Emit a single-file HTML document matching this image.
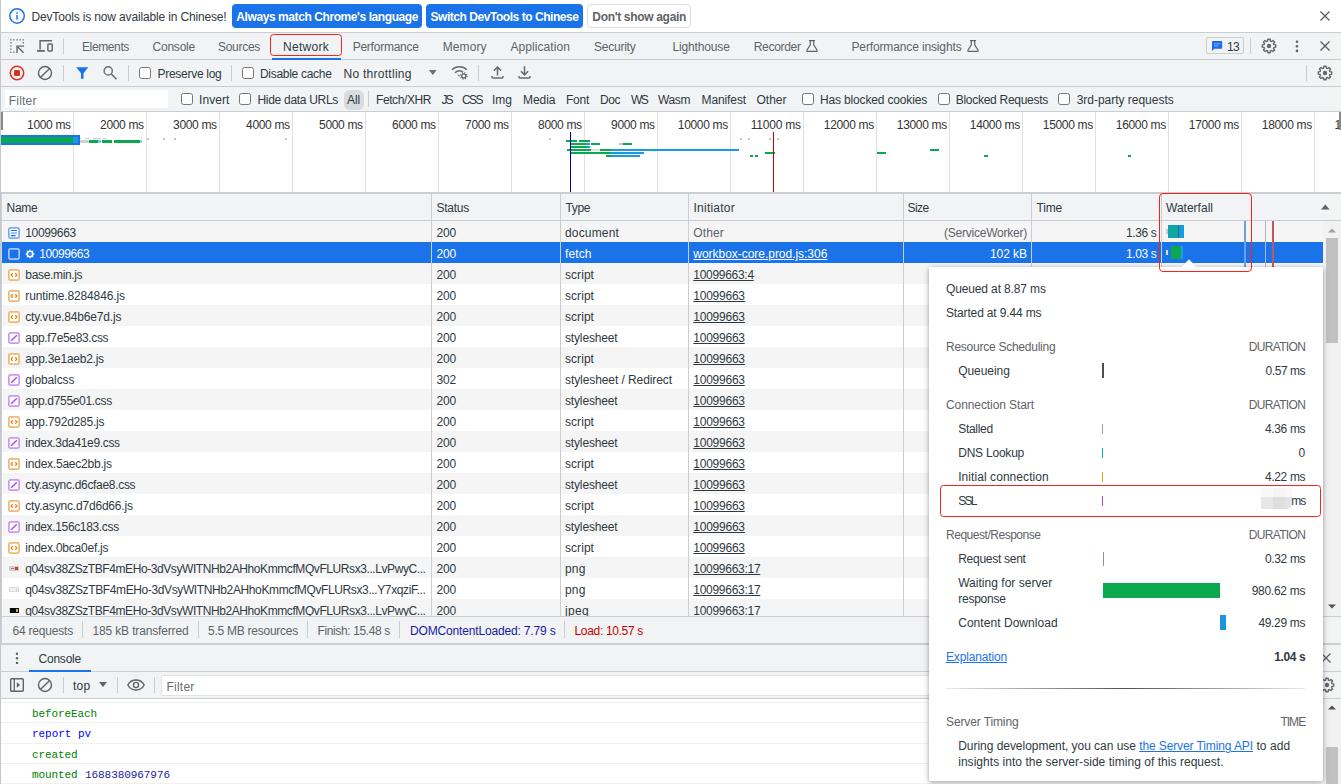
<!DOCTYPE html>
<html><head><meta charset="utf-8">
<style>
*{box-sizing:border-box;margin:0;padding:0}
html,body{width:1341px;height:784px;overflow:hidden;background:#fff}
body{font-family:"Liberation Sans",sans-serif;font-size:12px;color:#303942;position:relative}
.abs{position:absolute}
.t{position:absolute;white-space:pre}
.cb{position:absolute;width:12px;height:12px;border:1px solid #767676;border-radius:2.5px;background:#fff}
svg{position:absolute;overflow:visible}
</style></head><body>
<div class="abs" style="left:0px;top:0px;width:1341px;height:32px;background:#fff;"></div>
<div class="abs" style="left:0px;top:33px;width:1341px;height:26px;background:#f1f3f4;"></div>
<div class="abs" style="left:0px;top:60px;width:1341px;height:26px;background:#f1f3f4;"></div>
<div class="abs" style="left:0px;top:87px;width:1341px;height:24px;background:#f1f3f4;"></div>
<div class="abs" style="left:0px;top:32px;width:1341px;height:1px;background:#cacdd1;"></div>
<div class="abs" style="left:0px;top:59px;width:1341px;height:1px;background:#cacdd1;"></div>
<div class="abs" style="left:0px;top:86px;width:1341px;height:1px;background:#cacdd1;"></div>
<div class="abs" style="left:0px;top:111px;width:1341px;height:1px;background:#cacdd1;"></div>
<svg style="left:9px;top:8px" width="16" height="16" viewBox="0 0 16 16"><circle cx="8.05" cy="7.95" r="7.2" fill="none" stroke="#1a73e8" stroke-width="1.5"/><rect x="7.3" y="7" width="1.5" height="4.6" fill="#1a73e8"/><rect x="7.3" y="4.3" width="1.5" height="1.6" fill="#1a73e8"/></svg>
<span class="t" style="left:31.50px;top:10.00px;line-height:14px;letter-spacing:-0.156px;color:#303942">DevTools is now available in Chinese!</span>
<div class="abs" style="left:232px;top:4px;width:190px;height:24px;background:#1a73e8;border-radius:4px"></div>
<span class="t" style="left:236.30px;top:10.00px;line-height:14px;letter-spacing:-0.418px;color:#fff;font-weight:bold">Always match Chrome&#x27;s language</span>
<div class="abs" style="left:426px;top:4px;width:156.5px;height:24px;background:#1a73e8;border-radius:4px"></div>
<span class="t" style="left:430.50px;top:10.00px;line-height:14px;letter-spacing:-0.454px;color:#fff;font-weight:bold">Switch DevTools to Chinese</span>
<div class="abs" style="left:587px;top:4px;width:103.5px;height:24px;background:#fff;border-radius:4px;border:1px solid #dadce0"></div>
<span class="t" style="left:592.30px;top:10.00px;line-height:14px;letter-spacing:-0.322px;color:#5f6368;font-weight:bold">Don&#x27;t show again</span>
<svg style="left:1320px;top:11px" width="10" height="10" viewBox="0 0 10 10"><path d="M0.5 0.5L9.5 9.5M9.5 0.5L0.5 9.5" stroke="#54585c" stroke-width="1.2" fill="none"/></svg>
<svg style="left:9.85px;top:39px" width="14.2" height="14.2" viewBox="0 0 14.2 14.2"><rect x="0.2" y="0.2" width="1.3" height="1.3" fill="#686c70"/><rect x="3.2" y="0.2" width="1.3" height="1.3" fill="#686c70"/><rect x="6.4" y="0.2" width="1.3" height="1.3" fill="#686c70"/><rect x="9.6" y="0.2" width="1.3" height="1.3" fill="#686c70"/><rect x="12.6" y="0.2" width="1.3" height="1.3" fill="#686c70"/><rect x="0.2" y="3.1" width="1.3" height="1.3" fill="#686c70"/><rect x="0.2" y="6.4" width="1.3" height="1.3" fill="#686c70"/><rect x="0.2" y="9.5" width="1.3" height="1.3" fill="#686c70"/><rect x="0.2" y="12.6" width="1.3" height="1.3" fill="#686c70"/><rect x="12.6" y="3.1" width="1.3" height="1.3" fill="#686c70"/><rect x="3.2" y="12.6" width="1.3" height="1.3" fill="#686c70"/><path d="M7 14V7.1H14.1" fill="none" stroke="#63676b" stroke-width="1.4"/><path d="M7.3 7.4L13.6 13.7" stroke="#63676b" stroke-width="1.4"/></svg>
<svg style="left:37px;top:39px" width="17" height="14" viewBox="0 0 17 14"><path d="M3.1 10.5V1.8h11.9" fill="none" stroke="#63676b" stroke-width="1.5"/><path d="M0 11.9h7.8" stroke="#63676b" stroke-width="1.8"/><rect x="10.9" y="4.9" width="4.3" height="7.1" rx="0.9" fill="none" stroke="#63676b" stroke-width="1.5"/></svg>
<div class="abs" style="left:63px;top:38px;width:1px;height:16px;background:#cacdd1;"></div>
<span class="t" style="left:82.00px;top:40.00px;line-height:14px;letter-spacing:-0.379px;color:#5f6368">Elements</span>
<span class="t" style="left:152.50px;top:40.00px;line-height:14px;letter-spacing:-0.219px;color:#5f6368">Console</span>
<span class="t" style="left:218.00px;top:40.00px;line-height:14px;letter-spacing:-0.290px;color:#5f6368">Sources</span>
<span class="t" style="left:283.00px;top:40.00px;line-height:14px;letter-spacing:0.283px;color:#303942">Network</span>
<span class="t" style="left:352.70px;top:40.00px;line-height:14px;letter-spacing:-0.246px;color:#5f6368">Performance</span>
<span class="t" style="left:442.70px;top:40.00px;line-height:14px;letter-spacing:0.109px;color:#5f6368">Memory</span>
<span class="t" style="left:510.50px;top:40.00px;line-height:14px;letter-spacing:0.071px;color:#5f6368">Application</span>
<span class="t" style="left:594.00px;top:40.00px;line-height:14px;letter-spacing:-0.232px;color:#5f6368">Security</span>
<span class="t" style="left:672.50px;top:40.00px;line-height:14px;letter-spacing:-0.152px;color:#5f6368">Lighthouse</span>
<span class="t" style="left:753.70px;top:40.00px;line-height:14px;letter-spacing:-0.295px;color:#5f6368">Recorder</span>
<span class="t" style="left:851.50px;top:40.00px;line-height:14px;letter-spacing:-0.136px;color:#5f6368">Performance insights</span>
<div class="abs" style="left:272px;top:58px;width:69.2px;height:2px;background:#1a73e8;"></div>
<div class="abs" style="left:269.8px;top:33.7px;width:72.4px;height:22.6px;border:1.5px solid #fa231b;border-radius:3.5px"></div>
<svg style="left:806px;top:40px" width="12" height="12" viewBox="0 0 12 12"><path d="M3 0.7h6M4.3 0.7v4.2L0.9 10.3q-0.4 1 0.6 1h9q1 0 0.6-1L7.7 4.9V0.7" fill="none" stroke="#5f6368" stroke-width="1.2"/></svg>
<svg style="left:966.5px;top:40px" width="12" height="12" viewBox="0 0 12 12"><path d="M3 0.7h6M4.3 0.7v4.2L0.9 10.3q-0.4 1 0.6 1h9q1 0 0.6-1L7.7 4.9V0.7" fill="none" stroke="#5f6368" stroke-width="1.2"/></svg>
<div class="abs" style="left:1206.2px;top:37.3px;width:37.6px;height:17.2px;border:1px solid #cacdd1;border-radius:2px;background:#f1f3f4"></div>
<svg style="left:1212px;top:41px" width="10.2" height="10" viewBox="0 0 10.2 10"><path d="M1 0h8.2q1 0 1 1v5.8q0 1-1 1H2.4L0 10V1q0-1 1-1z" fill="#1a6cf0"/><rect x="2" y="2.3" width="6.2" height="1" fill="#8ab4f8"/><rect x="2" y="4.4" width="4.4" height="1" fill="#8ab4f8"/></svg>
<span class="t" style="left:1227.00px;top:40.00px;line-height:14px;letter-spacing:-0.780px;color:#303942">13</span>
<div class="abs" style="left:1250px;top:38px;width:1px;height:16px;background:#cacdd1;"></div>
<svg style="left:1260.95px;top:37.85px" width="16" height="16" viewBox="0 0 16 16"><path d="M6.63 3.04L6.85 1.30L9.15 1.30L9.37 3.04L10.54 3.52L11.93 2.45L13.55 4.07L12.48 5.46L12.96 6.63L14.70 6.85L14.70 9.15L12.96 9.37L12.48 10.54L13.55 11.93L11.93 13.55L10.54 12.48L9.37 12.96L9.15 14.70L6.85 14.70L6.63 12.96L5.46 12.48L4.07 13.55L2.45 11.93L3.52 10.54L3.04 9.37L1.30 9.15L1.30 6.85L3.04 6.63L3.52 5.46L2.45 4.07L4.07 2.45L5.46 3.52z" fill="none" stroke="#63676b" stroke-width="1.4" stroke-linejoin="round"/><circle cx="8" cy="8" r="2.2" fill="#63676b"/></svg>
<svg style="left:1294.5px;top:40px" width="4" height="13" viewBox="0 0 4 13"><circle cx="2" cy="1.7" r="1.3" fill="#5f6368"/><circle cx="2" cy="6.3" r="1.3" fill="#5f6368"/><circle cx="2" cy="10.9" r="1.3" fill="#5f6368"/></svg>
<svg style="left:1320px;top:41px" width="10" height="10" viewBox="0 0 10 10"><path d="M0.5 0.5L9.5 9.5M9.5 0.5L0.5 9.5" stroke="#54585c" stroke-width="1.2" fill="none"/></svg>
<svg style="left:9px;top:65px" width="16" height="16" viewBox="0 0 16 16"><circle cx="8" cy="8" r="6.7" fill="none" stroke="#d93025" stroke-width="1.5"/><rect x="5" y="5" width="6" height="6" rx="1.2" fill="#d93025"/></svg>
<svg style="left:37px;top:65px" width="16" height="16" viewBox="0 0 16 16"><circle cx="8" cy="8" r="6.5" fill="none" stroke="#5f6368" stroke-width="1.4"/><path d="M3.4 12.6L12.6 3.4" stroke="#5f6368" stroke-width="1.4"/></svg>
<div class="abs" style="left:63px;top:65px;width:1px;height:16px;background:#cacdd1;"></div>
<svg style="left:75.8px;top:67px" width="12.5" height="12" viewBox="0 0 12.5 12"><path d="M0.2 0.3h12.1L7.5 6.2V11.8H5V6.2z" fill="#1a73e8"/></svg>
<svg style="left:103px;top:66px" width="14" height="14" viewBox="0 0 14 14"><circle cx="5.2" cy="4.9" r="4.1" fill="none" stroke="#686c70" stroke-width="1.4"/><path d="M8.3 8L13.5 13.3" stroke="#686c70" stroke-width="1.6"/></svg>
<div class="abs" style="left:128px;top:65px;width:1px;height:16px;background:#cacdd1;"></div>
<div class="cb" style="left:139px;top:67px"></div>
<span class="t" style="left:157.50px;top:67.00px;line-height:14px;letter-spacing:-0.281px;color:#303942">Preserve log</span>
<div class="abs" style="left:231px;top:65px;width:1px;height:16px;background:#cacdd1;"></div>
<div class="cb" style="left:241.5px;top:67px"></div>
<span class="t" style="left:260.00px;top:67.00px;line-height:14px;letter-spacing:-0.298px;color:#303942">Disable cache</span>
<span class="t" style="left:343.50px;top:67.00px;line-height:14px;letter-spacing:0.269px;color:#303942">No throttling</span>
<svg style="left:429.3px;top:70px" width="7.6" height="5" viewBox="0 0 7.6 5"><path d="M0 0h7.6L3.8 5z" fill="#6a6d71"/></svg>
<svg style="left:451.2px;top:65.2px" width="17" height="15" viewBox="0 0 17 15"><path d="M1 4.8C5.2 0.7 11.6 0.7 15.8 4.8" fill="none" stroke="#686c70" stroke-width="1.5"/><path d="M4 7.7C6.4 5.4 9.6 5.3 12 7" fill="none" stroke="#686c70" stroke-width="1.5"/><path d="M6.3 9.7l2.2 2.2v-2.2z" fill="#686c70"/><circle cx="12.8" cy="10.9" r="2" fill="none" stroke="#686c70" stroke-width="1.3"/><circle cx="12.8" cy="10.9" r="3.1" fill="none" stroke="#686c70" stroke-width="1.3" stroke-dasharray="1.2 1.235"/></svg>
<div class="abs" style="left:478px;top:65px;width:1px;height:16px;background:#cacdd1;"></div>
<svg style="left:490.5px;top:66px" width="13" height="13" viewBox="0 0 13 13"><path d="M6.5 9.6V1M2.9 4.6L6.5 1l3.6 3.6" fill="none" stroke="#686c70" stroke-width="1.5"/><path d="M1 10v1.1q0 1 1 1h9q1 0 1-1V10" fill="none" stroke="#686c70" stroke-width="1.5"/></svg>
<svg style="left:518.4px;top:66px" width="13" height="13" viewBox="0 0 13 13"><path d="M6.5 0.2V8.8M2.9 5.3L6.5 8.9l3.6-3.6" fill="none" stroke="#686c70" stroke-width="1.5"/><path d="M1 10v1.1q0 1 1 1h9q1 0 1-1V10" fill="none" stroke="#686c70" stroke-width="1.5"/></svg>
<div class="abs" style="left:1306px;top:65px;width:1px;height:16px;background:#cacdd1;"></div>
<svg style="left:1317.1px;top:64.9px" width="16" height="16" viewBox="0 0 16 16"><path d="M6.63 3.04L6.85 1.30L9.15 1.30L9.37 3.04L10.54 3.52L11.93 2.45L13.55 4.07L12.48 5.46L12.96 6.63L14.70 6.85L14.70 9.15L12.96 9.37L12.48 10.54L13.55 11.93L11.93 13.55L10.54 12.48L9.37 12.96L9.15 14.70L6.85 14.70L6.63 12.96L5.46 12.48L4.07 13.55L2.45 11.93L3.52 10.54L3.04 9.37L1.30 9.15L1.30 6.85L3.04 6.63L3.52 5.46L2.45 4.07L4.07 2.45L5.46 3.52z" fill="none" stroke="#63676b" stroke-width="1.4" stroke-linejoin="round"/><circle cx="8" cy="8" r="2.2" fill="#63676b"/></svg>
<div class="abs" style="left:5px;top:90px;width:163px;height:18px;background:#fff;"></div>
<span class="t" style="left:8.70px;top:94.00px;line-height:14px;letter-spacing:0.221px;color:#6a6e73">Filter</span>
<div class="cb" style="left:181px;top:93px"></div>
<span class="t" style="left:199.00px;top:93.00px;line-height:14px;letter-spacing:0.081px;color:#303942">Invert</span>
<div class="cb" style="left:239px;top:93px"></div>
<span class="t" style="left:257.50px;top:93.00px;line-height:14px;letter-spacing:-0.301px;color:#303942">Hide data URLs</span>
<div class="abs" style="left:344px;top:89.5px;width:19.5px;height:20px;background:#d9dbdf;border-radius:6px"></div>
<span class="t" style="left:347.00px;top:93.00px;line-height:14px;letter-spacing:-0.115px;color:#303942">All</span>
<div class="abs" style="left:368px;top:91px;width:1px;height:16px;background:#cacdd1;"></div>
<span class="t" style="left:376.00px;top:93.00px;line-height:14px;letter-spacing:-0.410px;color:#303942">Fetch/XHR</span>
<span class="t" style="left:441.50px;top:93.00px;line-height:14px;letter-spacing:-2.008px;color:#303942">JS</span>
<span class="t" style="left:462.00px;top:93.00px;line-height:14px;letter-spacing:-1.562px;color:#303942">CSS</span>
<span class="t" style="left:492.00px;top:93.00px;line-height:14px;letter-spacing:-0.005px;color:#303942">Img</span>
<span class="t" style="left:523.00px;top:93.00px;line-height:14px;letter-spacing:-0.037px;color:#303942">Media</span>
<span class="t" style="left:566.00px;top:93.00px;line-height:14px;letter-spacing:-0.254px;color:#303942">Font</span>
<span class="t" style="left:600.00px;top:93.00px;line-height:14px;letter-spacing:-0.448px;color:#303942">Doc</span>
<span class="t" style="left:631.00px;top:93.00px;line-height:14px;letter-spacing:-1.672px;color:#303942">WS</span>
<span class="t" style="left:658.00px;top:93.00px;line-height:14px;letter-spacing:-0.391px;color:#303942">Wasm</span>
<span class="t" style="left:701.50px;top:93.00px;line-height:14px;letter-spacing:-0.107px;color:#303942">Manifest</span>
<span class="t" style="left:756.50px;top:93.00px;line-height:14px;letter-spacing:-0.003px;color:#303942">Other</span>
<div class="cb" style="left:802px;top:93px"></div>
<span class="t" style="left:820.00px;top:93.00px;line-height:14px;letter-spacing:-0.161px;color:#303942">Has blocked cookies</span>
<div class="cb" style="left:937.5px;top:93px"></div>
<span class="t" style="left:955.70px;top:93.00px;line-height:14px;letter-spacing:-0.277px;color:#303942">Blocked Requests</span>
<div class="cb" style="left:1058px;top:93px"></div>
<span class="t" style="left:1076.70px;top:93.00px;line-height:14px;letter-spacing:-0.022px;color:#303942">3rd-party requests</span>
<div class="abs" style="left:0px;top:112px;width:1341px;height:80px;background:#fff;"></div>
<div class="abs" style="left:73px;top:112px;width:1px;height:80px;background:#e1e1e1;"></div>
<span class="t" style="left:27.05px;top:118.00px;line-height:14px;letter-spacing:-0.326px;color:#333">1000 ms</span>
<div class="abs" style="left:146px;top:112px;width:1px;height:80px;background:#e1e1e1;"></div>
<span class="t" style="left:100.05px;top:118.00px;line-height:14px;letter-spacing:-0.326px;color:#333">2000 ms</span>
<div class="abs" style="left:219px;top:112px;width:1px;height:80px;background:#e1e1e1;"></div>
<span class="t" style="left:173.05px;top:118.00px;line-height:14px;letter-spacing:-0.326px;color:#333">3000 ms</span>
<div class="abs" style="left:292px;top:112px;width:1px;height:80px;background:#e1e1e1;"></div>
<span class="t" style="left:246.05px;top:118.00px;line-height:14px;letter-spacing:-0.326px;color:#333">4000 ms</span>
<div class="abs" style="left:365px;top:112px;width:1px;height:80px;background:#e1e1e1;"></div>
<span class="t" style="left:319.05px;top:118.00px;line-height:14px;letter-spacing:-0.326px;color:#333">5000 ms</span>
<div class="abs" style="left:438px;top:112px;width:1px;height:80px;background:#e1e1e1;"></div>
<span class="t" style="left:392.05px;top:118.00px;line-height:14px;letter-spacing:-0.326px;color:#333">6000 ms</span>
<div class="abs" style="left:511px;top:112px;width:1px;height:80px;background:#e1e1e1;"></div>
<span class="t" style="left:465.05px;top:118.00px;line-height:14px;letter-spacing:-0.326px;color:#333">7000 ms</span>
<div class="abs" style="left:584px;top:112px;width:1px;height:80px;background:#e1e1e1;"></div>
<span class="t" style="left:538.05px;top:118.00px;line-height:14px;letter-spacing:-0.326px;color:#333">8000 ms</span>
<div class="abs" style="left:657px;top:112px;width:1px;height:80px;background:#e1e1e1;"></div>
<span class="t" style="left:611.05px;top:118.00px;line-height:14px;letter-spacing:-0.326px;color:#333">9000 ms</span>
<div class="abs" style="left:730px;top:112px;width:1px;height:80px;background:#e1e1e1;"></div>
<span class="t" style="left:677.80px;top:118.00px;line-height:14px;letter-spacing:-0.338px;color:#333">10000 ms</span>
<div class="abs" style="left:803px;top:112px;width:1px;height:80px;background:#e1e1e1;"></div>
<span class="t" style="left:750.80px;top:118.00px;line-height:14px;letter-spacing:-0.227px;color:#333">11000 ms</span>
<div class="abs" style="left:876px;top:112px;width:1px;height:80px;background:#e1e1e1;"></div>
<span class="t" style="left:823.80px;top:118.00px;line-height:14px;letter-spacing:-0.338px;color:#333">12000 ms</span>
<div class="abs" style="left:949px;top:112px;width:1px;height:80px;background:#e1e1e1;"></div>
<span class="t" style="left:896.80px;top:118.00px;line-height:14px;letter-spacing:-0.338px;color:#333">13000 ms</span>
<div class="abs" style="left:1022px;top:112px;width:1px;height:80px;background:#e1e1e1;"></div>
<span class="t" style="left:969.80px;top:118.00px;line-height:14px;letter-spacing:-0.338px;color:#333">14000 ms</span>
<div class="abs" style="left:1095px;top:112px;width:1px;height:80px;background:#e1e1e1;"></div>
<span class="t" style="left:1042.80px;top:118.00px;line-height:14px;letter-spacing:-0.338px;color:#333">15000 ms</span>
<div class="abs" style="left:1168px;top:112px;width:1px;height:80px;background:#e1e1e1;"></div>
<span class="t" style="left:1115.80px;top:118.00px;line-height:14px;letter-spacing:-0.338px;color:#333">16000 ms</span>
<div class="abs" style="left:1241px;top:112px;width:1px;height:80px;background:#e1e1e1;"></div>
<span class="t" style="left:1188.80px;top:118.00px;line-height:14px;letter-spacing:-0.338px;color:#333">17000 ms</span>
<div class="abs" style="left:1314px;top:112px;width:1px;height:80px;background:#e1e1e1;"></div>
<span class="t" style="left:1261.80px;top:118.00px;line-height:14px;letter-spacing:-0.338px;color:#333">18000 ms</span>
<span class="t" style="left:1334.50px;top:118.00px;line-height:14px;color:#333">19000 ms</span>
<div class="abs" style="left:1px;top:112px;width:2px;height:18px;background:#8a8a8a;"></div>
<div class="abs" style="left:1339px;top:112px;width:2px;height:18px;background:#8a8a8a;"></div>
<div class="abs" style="left:1px;top:135.3px;width:79px;height:10.2px;background:#1a73e8;"></div>
<div class="abs" style="left:1px;top:137.3px;width:72.4px;height:5.3px;background:#0aa84f;"></div>
<div class="abs" style="left:73.4px;top:137.3px;width:5.1px;height:5.3px;background:#1a9ae0;"></div>
<div class="abs" style="left:80px;top:137.5px;width:1px;height:1.5px;background:#bbb;"></div>
<div class="abs" style="left:85px;top:137.5px;width:4px;height:1.5px;background:#ccc;"></div>
<div class="abs" style="left:93px;top:137.5px;width:8px;height:1.5px;background:#ccc;"></div>
<div class="abs" style="left:103px;top:137.5px;width:3px;height:1.5px;background:#ccc;"></div>
<div class="abs" style="left:80px;top:140.3px;width:8.5px;height:2.3px;background:#d0d0d0;"></div>
<div class="abs" style="left:89px;top:140.3px;width:9px;height:2.3px;background:#0aa84f;"></div>
<div class="abs" style="left:98px;top:140.3px;width:3px;height:2.3px;background:#7cc4f0;"></div>
<div class="abs" style="left:102px;top:140.3px;width:10px;height:2.3px;background:#0aa84f;"></div>
<div class="abs" style="left:114.2px;top:140.3px;width:25.8px;height:2.3px;background:#0aa84f;"></div>
<div class="abs" style="left:140px;top:140.3px;width:1.5px;height:2.3px;background:#9ad0f4;"></div>
<div class="abs" style="left:147px;top:137.5px;width:1.5px;height:2px;background:#c4c4c4;"></div>
<div class="abs" style="left:163px;top:137.5px;width:1.5px;height:2px;background:#c4c4c4;"></div>
<div class="abs" style="left:174px;top:137.5px;width:1.5px;height:2px;background:#c4c4c4;"></div>
<div class="abs" style="left:285px;top:137.5px;width:1.5px;height:2px;background:#c4c4c4;"></div>
<div class="abs" style="left:549px;top:137.5px;width:1.5px;height:2px;background:#c4c4c4;"></div>
<div class="abs" style="left:740px;top:137.5px;width:1.5px;height:2px;background:#c4c4c4;"></div>
<div class="abs" style="left:748px;top:137.5px;width:1.5px;height:2px;background:#c4c4c4;"></div>
<div class="abs" style="left:769px;top:137.5px;width:1.5px;height:2px;background:#c4c4c4;"></div>
<div class="abs" style="left:777px;top:137.5px;width:1.5px;height:2px;background:#c4c4c4;"></div>
<div class="abs" style="left:141px;top:137px;width:1px;height:1px;background:#aaa;"></div>
<div class="abs" style="left:566px;top:140px;width:11px;height:2px;background:#0aa84f;"></div>
<div class="abs" style="left:579px;top:140px;width:11px;height:2px;background:#0aa84f;"></div>
<div class="abs" style="left:570px;top:143px;width:16px;height:2px;background:#0aa84f;"></div>
<div class="abs" style="left:586px;top:143px;width:4px;height:2px;background:#1a9ae0;"></div>
<div class="abs" style="left:591px;top:143px;width:9px;height:2px;background:#0aa84f;"></div>
<div class="abs" style="left:619px;top:143px;width:3.5px;height:2px;background:#c4c4c4;"></div>
<div class="abs" style="left:622.5px;top:143px;width:9.5px;height:2px;background:#0aa84f;"></div>
<div class="abs" style="left:570px;top:146px;width:17px;height:2px;background:#0aa84f;"></div>
<div class="abs" style="left:587px;top:146px;width:3px;height:2px;background:#1a9ae0;"></div>
<div class="abs" style="left:567px;top:149px;width:24px;height:2px;background:#0aa84f;"></div>
<div class="abs" style="left:591px;top:149px;width:9px;height:2px;background:#e0e0e0;"></div>
<div class="abs" style="left:600px;top:149px;width:11px;height:2px;background:#0aa84f;"></div>
<div class="abs" style="left:611px;top:149px;width:128px;height:2px;background:#1a9ae0;"></div>
<div class="abs" style="left:570px;top:152px;width:41px;height:2px;background:#0aa84f;"></div>
<div class="abs" style="left:611px;top:152px;width:33px;height:2px;background:#1a9ae0;"></div>
<div class="abs" style="left:606px;top:155px;width:5px;height:2px;background:#0aa84f;"></div>
<div class="abs" style="left:611px;top:155px;width:29px;height:2px;background:#1a9ae0;"></div>
<div class="abs" style="left:765px;top:152px;width:10px;height:2px;background:#0aa84f;"></div>
<div class="abs" style="left:749.5px;top:155px;width:3px;height:2px;background:#0aa84f;"></div>
<div class="abs" style="left:754.5px;top:155px;width:3px;height:2px;background:#0aa84f;"></div>
<div class="abs" style="left:876.5px;top:152px;width:9px;height:2px;background:#0aa84f;"></div>
<div class="abs" style="left:930px;top:149px;width:8.7px;height:2px;background:#0aa84f;"></div>
<div class="abs" style="left:984px;top:155px;width:4px;height:2px;background:#0aa84f;"></div>
<div class="abs" style="left:1128px;top:155px;width:3px;height:2px;background:#0aa84f;"></div>
<div class="abs" style="left:570px;top:132px;width:1px;height:60px;background:#0000a8;"></div>
<div class="abs" style="left:772.5px;top:132px;width:1px;height:60px;background:#c80000;"></div>
<div class="abs" style="left:0px;top:192px;width:1341px;height:2px;background:#cacdd1;"></div>
<div class="abs" style="left:0px;top:194px;width:1341px;height:26px;background:#f1f3f4;"></div>
<div class="abs" style="left:0px;top:220px;width:1341px;height:1px;background:#cacdd1;"></div>
<div class="abs" style="left:0;top:221px;width:1341px;height:395px;overflow:hidden">
<div class="abs" style="left:2px;top:0px;width:1321px;height:21px;background:#f5f5f5;"></div>
<div class="abs" style="left:2px;top:21px;width:1321px;height:21px;background:#1a73e8;"></div>
<div class="abs" style="left:2px;top:42px;width:1321px;height:21px;background:#f5f5f5;"></div>
<div class="abs" style="left:2px;top:84px;width:1321px;height:21px;background:#f5f5f5;"></div>
<div class="abs" style="left:2px;top:126px;width:1321px;height:21px;background:#f5f5f5;"></div>
<div class="abs" style="left:2px;top:168px;width:1321px;height:21px;background:#f5f5f5;"></div>
<div class="abs" style="left:2px;top:210px;width:1321px;height:21px;background:#f5f5f5;"></div>
<div class="abs" style="left:2px;top:252px;width:1321px;height:21px;background:#f5f5f5;"></div>
<div class="abs" style="left:2px;top:294px;width:1321px;height:21px;background:#f5f5f5;"></div>
<div class="abs" style="left:2px;top:336px;width:1321px;height:21px;background:#f5f5f5;"></div>
<div class="abs" style="left:2px;top:378px;width:1321px;height:21px;background:#f5f5f5;"></div>
</div>
<div class="abs" style="left:431px;top:194px;width:1px;height:422px;background:#cacdd1;"></div>
<div class="abs" style="left:560px;top:194px;width:1px;height:422px;background:#cacdd1;"></div>
<div class="abs" style="left:688px;top:194px;width:1px;height:422px;background:#cacdd1;"></div>
<div class="abs" style="left:903px;top:194px;width:1px;height:422px;background:#cacdd1;"></div>
<div class="abs" style="left:1031px;top:194px;width:1px;height:422px;background:#cacdd1;"></div>
<div class="abs" style="left:1161px;top:194px;width:1px;height:422px;background:#cacdd1;"></div>
<div class="abs" style="left:0;top:0;width:1341px;height:616px;overflow:hidden">
<svg style="left:8px;top:227px" width="12" height="12" viewBox="0 0 12 12"><rect x="0.85" y="0.85" width="10.3" height="10.3" rx="1.6" fill="#fff" stroke="#7baaf7" stroke-width="1.7"/><path d="M3 3.5h6M3 8.6h4.6" stroke="#1a66f0" stroke-width="1.15"/><path d="M3 6.05h6" stroke="#7baaf7" stroke-width="1.5"/></svg>
<span class="t" style="left:25.30px;top:226.00px;line-height:14px;letter-spacing:-0.361px;color:#303942">10099663</span>
<span class="t" style="left:436.50px;top:226.00px;line-height:14px;letter-spacing:-0.177px;color:#303942">200</span>
<span class="t" style="left:565.00px;top:226.00px;line-height:14px;letter-spacing:0.162px;color:#303942">document</span>
<span class="t" style="left:693.30px;top:226.00px;line-height:14px;letter-spacing:0.097px;color:#5f6368">Other</span>
<span class="t" style="left:944.00px;top:226.00px;line-height:14px;letter-spacing:-0.231px;color:#5f6368">(ServiceWorker)</span>
<span class="t" style="left:1126.00px;top:226.00px;line-height:14px;letter-spacing:-0.367px;color:#303942">1.36 s</span>
<svg style="left:8px;top:248px" width="12" height="12" viewBox="0 0 12 12"><rect x="0.85" y="0.85" width="10.3" height="10.3" rx="1.6" fill="none" stroke="#a9c5f5" stroke-width="1.7"/></svg>
<svg style="left:25.4px;top:248.65px" width="10" height="10" viewBox="0 0 10 10"><path d="M5 0.2l0.9 1.6h-1.8zM5 9.8l0.9-1.6h-1.8zM0.2 5l1.6 0.9v-1.8zM9.8 5l-1.6 0.9v-1.8zM1.6 1.6l1.8 0.5l-1.3 1.3zM8.4 1.6l-0.5 1.8l-1.3-1.3zM1.6 8.4l0.5-1.8l1.3 1.3zM8.4 8.4l-1.8-0.5l1.3-1.3z" fill="#fff"/><circle cx="5" cy="5" r="2.75" fill="none" stroke="#fff" stroke-width="1.6"/><circle cx="5" cy="5" r="0.55" fill="#fff"/></svg>
<span class="t" style="left:39.30px;top:247.00px;line-height:14px;letter-spacing:-0.424px;color:#fff">10099663</span>
<span class="t" style="left:436.50px;top:247.00px;line-height:14px;letter-spacing:-0.177px;color:#fff">200</span>
<span class="t" style="left:565.00px;top:247.00px;line-height:14px;letter-spacing:0.097px;color:#fff">fetch</span>
<span class="t" style="left:693.30px;top:247.00px;line-height:14px;letter-spacing:-0.031px;color:#fff;text-decoration:underline">workbox-core.prod.js:306</span>
<span class="t" style="left:990.00px;top:247.00px;line-height:14px;letter-spacing:-0.060px;color:#fff">102 kB</span>
<span class="t" style="left:1126.00px;top:247.00px;line-height:14px;letter-spacing:-0.367px;color:#fff">1.03 s</span>
<svg style="left:8px;top:269px" width="12" height="12" viewBox="0 0 12 12"><rect x="0.85" y="0.85" width="10.3" height="10.3" rx="1.6" fill="#fff" stroke="#edb977" stroke-width="1.7"/><path d="M4.7 4.2L3.2 6L4.7 7.8M7.3 4.2L8.8 6L7.3 7.8" fill="none" stroke="#e8850c" stroke-width="1.3"/></svg>
<span class="t" style="left:25.30px;top:268.00px;line-height:14px;letter-spacing:-0.337px;color:#303942">base.min.js</span>
<span class="t" style="left:436.50px;top:268.00px;line-height:14px;letter-spacing:-0.177px;color:#303942">200</span>
<span class="t" style="left:565.00px;top:268.00px;line-height:14px;letter-spacing:0.055px;color:#303942">script</span>
<span class="t" style="left:693.30px;top:268.00px;line-height:14px;letter-spacing:-0.291px;color:#303942;text-decoration:underline">10099663:4</span>
<svg style="left:8px;top:290px" width="12" height="12" viewBox="0 0 12 12"><rect x="0.85" y="0.85" width="10.3" height="10.3" rx="1.6" fill="#fff" stroke="#edb977" stroke-width="1.7"/><path d="M4.7 4.2L3.2 6L4.7 7.8M7.3 4.2L8.8 6L7.3 7.8" fill="none" stroke="#e8850c" stroke-width="1.3"/></svg>
<span class="t" style="left:25.30px;top:289.00px;line-height:14px;letter-spacing:-0.143px;color:#303942">runtime.8284846.js</span>
<span class="t" style="left:436.50px;top:289.00px;line-height:14px;letter-spacing:-0.177px;color:#303942">200</span>
<span class="t" style="left:565.00px;top:289.00px;line-height:14px;letter-spacing:0.055px;color:#303942">script</span>
<span class="t" style="left:693.30px;top:289.00px;line-height:14px;letter-spacing:-0.236px;color:#303942;text-decoration:underline">10099663</span>
<svg style="left:8px;top:311px" width="12" height="12" viewBox="0 0 12 12"><rect x="0.85" y="0.85" width="10.3" height="10.3" rx="1.6" fill="#fff" stroke="#edb977" stroke-width="1.7"/><path d="M4.7 4.2L3.2 6L4.7 7.8M7.3 4.2L8.8 6L7.3 7.8" fill="none" stroke="#e8850c" stroke-width="1.3"/></svg>
<span class="t" style="left:25.30px;top:310.00px;line-height:14px;letter-spacing:-0.177px;color:#303942">cty.vue.84b6e7d.js</span>
<span class="t" style="left:436.50px;top:310.00px;line-height:14px;letter-spacing:-0.177px;color:#303942">200</span>
<span class="t" style="left:565.00px;top:310.00px;line-height:14px;letter-spacing:0.055px;color:#303942">script</span>
<span class="t" style="left:693.30px;top:310.00px;line-height:14px;letter-spacing:-0.236px;color:#303942;text-decoration:underline">10099663</span>
<svg style="left:8px;top:332px" width="12" height="12" viewBox="0 0 12 12"><rect x="0.85" y="0.85" width="10.3" height="10.3" rx="1.6" fill="#fff" stroke="#cb98f5" stroke-width="1.7"/><path d="M3.1 8.7L8.9 3.2" stroke="#a142f4" stroke-width="1.3"/></svg>
<span class="t" style="left:25.30px;top:331.00px;line-height:14px;letter-spacing:-0.339px;color:#303942">app.f7e5e83.css</span>
<span class="t" style="left:436.50px;top:331.00px;line-height:14px;letter-spacing:-0.177px;color:#303942">200</span>
<span class="t" style="left:565.00px;top:331.00px;line-height:14px;letter-spacing:-0.153px;color:#303942">stylesheet</span>
<span class="t" style="left:693.30px;top:331.00px;line-height:14px;letter-spacing:-0.236px;color:#303942;text-decoration:underline">10099663</span>
<svg style="left:8px;top:353px" width="12" height="12" viewBox="0 0 12 12"><rect x="0.85" y="0.85" width="10.3" height="10.3" rx="1.6" fill="#fff" stroke="#edb977" stroke-width="1.7"/><path d="M4.7 4.2L3.2 6L4.7 7.8M7.3 4.2L8.8 6L7.3 7.8" fill="none" stroke="#e8850c" stroke-width="1.3"/></svg>
<span class="t" style="left:25.30px;top:352.00px;line-height:14px;letter-spacing:-0.256px;color:#303942">app.3e1aeb2.js</span>
<span class="t" style="left:436.50px;top:352.00px;line-height:14px;letter-spacing:-0.177px;color:#303942">200</span>
<span class="t" style="left:565.00px;top:352.00px;line-height:14px;letter-spacing:0.055px;color:#303942">script</span>
<span class="t" style="left:693.30px;top:352.00px;line-height:14px;letter-spacing:-0.236px;color:#303942;text-decoration:underline">10099663</span>
<svg style="left:8px;top:374px" width="12" height="12" viewBox="0 0 12 12"><rect x="0.85" y="0.85" width="10.3" height="10.3" rx="1.6" fill="#fff" stroke="#cb98f5" stroke-width="1.7"/><path d="M3.1 8.7L8.9 3.2" stroke="#a142f4" stroke-width="1.3"/></svg>
<span class="t" style="left:25.30px;top:373.00px;line-height:14px;letter-spacing:-0.115px;color:#303942">globalcss</span>
<span class="t" style="left:436.50px;top:373.00px;line-height:14px;letter-spacing:-0.177px;color:#303942">302</span>
<span class="t" style="left:565.00px;top:373.00px;line-height:14px;letter-spacing:-0.082px;color:#303942">stylesheet / Redirect</span>
<span class="t" style="left:693.30px;top:373.00px;line-height:14px;letter-spacing:-0.236px;color:#303942;text-decoration:underline">10099663</span>
<svg style="left:8px;top:395px" width="12" height="12" viewBox="0 0 12 12"><rect x="0.85" y="0.85" width="10.3" height="10.3" rx="1.6" fill="#fff" stroke="#cb98f5" stroke-width="1.7"/><path d="M3.1 8.7L8.9 3.2" stroke="#a142f4" stroke-width="1.3"/></svg>
<span class="t" style="left:25.30px;top:394.00px;line-height:14px;letter-spacing:-0.327px;color:#303942">app.d755e01.css</span>
<span class="t" style="left:436.50px;top:394.00px;line-height:14px;letter-spacing:-0.177px;color:#303942">200</span>
<span class="t" style="left:565.00px;top:394.00px;line-height:14px;letter-spacing:-0.153px;color:#303942">stylesheet</span>
<span class="t" style="left:693.30px;top:394.00px;line-height:14px;letter-spacing:-0.236px;color:#303942;text-decoration:underline">10099663</span>
<svg style="left:8px;top:416px" width="12" height="12" viewBox="0 0 12 12"><rect x="0.85" y="0.85" width="10.3" height="10.3" rx="1.6" fill="#fff" stroke="#edb977" stroke-width="1.7"/><path d="M4.7 4.2L3.2 6L4.7 7.8M7.3 4.2L8.8 6L7.3 7.8" fill="none" stroke="#e8850c" stroke-width="1.3"/></svg>
<span class="t" style="left:25.30px;top:415.00px;line-height:14px;letter-spacing:-0.220px;color:#303942">app.792d285.js</span>
<span class="t" style="left:436.50px;top:415.00px;line-height:14px;letter-spacing:-0.177px;color:#303942">200</span>
<span class="t" style="left:565.00px;top:415.00px;line-height:14px;letter-spacing:0.055px;color:#303942">script</span>
<span class="t" style="left:693.30px;top:415.00px;line-height:14px;letter-spacing:-0.236px;color:#303942;text-decoration:underline">10099663</span>
<svg style="left:8px;top:437px" width="12" height="12" viewBox="0 0 12 12"><rect x="0.85" y="0.85" width="10.3" height="10.3" rx="1.6" fill="#fff" stroke="#cb98f5" stroke-width="1.7"/><path d="M3.1 8.7L8.9 3.2" stroke="#a142f4" stroke-width="1.3"/></svg>
<span class="t" style="left:25.30px;top:436.00px;line-height:14px;letter-spacing:-0.328px;color:#303942">index.3da41e9.css</span>
<span class="t" style="left:436.50px;top:436.00px;line-height:14px;letter-spacing:-0.177px;color:#303942">200</span>
<span class="t" style="left:565.00px;top:436.00px;line-height:14px;letter-spacing:-0.153px;color:#303942">stylesheet</span>
<span class="t" style="left:693.30px;top:436.00px;line-height:14px;letter-spacing:-0.236px;color:#303942;text-decoration:underline">10099663</span>
<svg style="left:8px;top:458px" width="12" height="12" viewBox="0 0 12 12"><rect x="0.85" y="0.85" width="10.3" height="10.3" rx="1.6" fill="#fff" stroke="#edb977" stroke-width="1.7"/><path d="M4.7 4.2L3.2 6L4.7 7.8M7.3 4.2L8.8 6L7.3 7.8" fill="none" stroke="#e8850c" stroke-width="1.3"/></svg>
<span class="t" style="left:25.30px;top:457.00px;line-height:14px;letter-spacing:-0.224px;color:#303942">index.5aec2bb.js</span>
<span class="t" style="left:436.50px;top:457.00px;line-height:14px;letter-spacing:-0.177px;color:#303942">200</span>
<span class="t" style="left:565.00px;top:457.00px;line-height:14px;letter-spacing:0.055px;color:#303942">script</span>
<span class="t" style="left:693.30px;top:457.00px;line-height:14px;letter-spacing:-0.236px;color:#303942;text-decoration:underline">10099663</span>
<svg style="left:8px;top:479px" width="12" height="12" viewBox="0 0 12 12"><rect x="0.85" y="0.85" width="10.3" height="10.3" rx="1.6" fill="#fff" stroke="#cb98f5" stroke-width="1.7"/><path d="M3.1 8.7L8.9 3.2" stroke="#a142f4" stroke-width="1.3"/></svg>
<span class="t" style="left:25.30px;top:478.00px;line-height:14px;letter-spacing:-0.310px;color:#303942">cty.async.d6cfae8.css</span>
<span class="t" style="left:436.50px;top:478.00px;line-height:14px;letter-spacing:-0.177px;color:#303942">200</span>
<span class="t" style="left:565.00px;top:478.00px;line-height:14px;letter-spacing:-0.153px;color:#303942">stylesheet</span>
<span class="t" style="left:693.30px;top:478.00px;line-height:14px;letter-spacing:-0.236px;color:#303942;text-decoration:underline">10099663</span>
<svg style="left:8px;top:500px" width="12" height="12" viewBox="0 0 12 12"><rect x="0.85" y="0.85" width="10.3" height="10.3" rx="1.6" fill="#fff" stroke="#edb977" stroke-width="1.7"/><path d="M4.7 4.2L3.2 6L4.7 7.8M7.3 4.2L8.8 6L7.3 7.8" fill="none" stroke="#e8850c" stroke-width="1.3"/></svg>
<span class="t" style="left:25.30px;top:499.00px;line-height:14px;letter-spacing:-0.184px;color:#303942">cty.async.d7d6d66.js</span>
<span class="t" style="left:436.50px;top:499.00px;line-height:14px;letter-spacing:-0.177px;color:#303942">200</span>
<span class="t" style="left:565.00px;top:499.00px;line-height:14px;letter-spacing:0.055px;color:#303942">script</span>
<span class="t" style="left:693.30px;top:499.00px;line-height:14px;letter-spacing:-0.236px;color:#303942;text-decoration:underline">10099663</span>
<svg style="left:8px;top:521px" width="12" height="12" viewBox="0 0 12 12"><rect x="0.85" y="0.85" width="10.3" height="10.3" rx="1.6" fill="#fff" stroke="#cb98f5" stroke-width="1.7"/><path d="M3.1 8.7L8.9 3.2" stroke="#a142f4" stroke-width="1.3"/></svg>
<span class="t" style="left:25.30px;top:520.00px;line-height:14px;letter-spacing:-0.347px;color:#303942">index.156c183.css</span>
<span class="t" style="left:436.50px;top:520.00px;line-height:14px;letter-spacing:-0.177px;color:#303942">200</span>
<span class="t" style="left:565.00px;top:520.00px;line-height:14px;letter-spacing:-0.153px;color:#303942">stylesheet</span>
<span class="t" style="left:693.30px;top:520.00px;line-height:14px;letter-spacing:-0.236px;color:#303942;text-decoration:underline">10099663</span>
<svg style="left:8px;top:542px" width="12" height="12" viewBox="0 0 12 12"><rect x="0.85" y="0.85" width="10.3" height="10.3" rx="1.6" fill="#fff" stroke="#edb977" stroke-width="1.7"/><path d="M4.7 4.2L3.2 6L4.7 7.8M7.3 4.2L8.8 6L7.3 7.8" fill="none" stroke="#e8850c" stroke-width="1.3"/></svg>
<span class="t" style="left:25.30px;top:541.00px;line-height:14px;letter-spacing:-0.233px;color:#303942">index.0bca0ef.js</span>
<span class="t" style="left:436.50px;top:541.00px;line-height:14px;letter-spacing:-0.177px;color:#303942">200</span>
<span class="t" style="left:565.00px;top:541.00px;line-height:14px;letter-spacing:0.055px;color:#303942">script</span>
<span class="t" style="left:693.30px;top:541.00px;line-height:14px;letter-spacing:-0.236px;color:#303942;text-decoration:underline">10099663</span>
<div class="abs" style="left:9px;top:566px;width:10px;height:5px;background:#cdd1d8;"></div>
<div class="abs" style="left:10.5px;top:567.5px;width:3px;height:1.5px;background:#e06060;"></div>
<div class="abs" style="left:14.5px;top:567px;width:3.5px;height:3px;background:#e03535;"></div>
<span class="t" style="left:25.30px;top:562.00px;line-height:14px;letter-spacing:-0.418px;color:#303942">q04sv38ZSzTBF4mEHo-3dVsyWITNHb2AHhoKmmcfMQvFLURsx3...LvPwyC...</span>
<span class="t" style="left:436.50px;top:562.00px;line-height:14px;letter-spacing:-0.177px;color:#303942">200</span>
<span class="t" style="left:565.00px;top:562.00px;line-height:14px;letter-spacing:0.156px;color:#303942">png</span>
<span class="t" style="left:693.30px;top:562.00px;line-height:14px;letter-spacing:-0.280px;color:#303942;text-decoration:underline">10099663:17</span>
<div class="abs" style="left:9px;top:587px;width:10px;height:5px;background:#d9dce1;"></div>
<div class="abs" style="left:9.7px;top:587.7px;width:8.6px;height:3.6px;background:#eceef1;"></div>
<div class="abs" style="left:15.5px;top:588.5px;width:1.5px;height:2px;background:#e3c5c5;"></div>
<span class="t" style="left:25.30px;top:583.00px;line-height:14px;letter-spacing:-0.380px;color:#303942">q04sv38ZSzTBF4mEHo-3dVsyWITNHb2AHhoKmmcfMQvFLURsx3...Y7xqziF...</span>
<span class="t" style="left:436.50px;top:583.00px;line-height:14px;letter-spacing:-0.177px;color:#303942">200</span>
<span class="t" style="left:565.00px;top:583.00px;line-height:14px;letter-spacing:0.156px;color:#303942">png</span>
<span class="t" style="left:693.30px;top:583.00px;line-height:14px;letter-spacing:-0.280px;color:#303942;text-decoration:underline">10099663:17</span>
<div class="abs" style="left:9px;top:608px;width:10px;height:5px;background:#cfd2d6;"></div>
<div class="abs" style="left:9.5px;top:608.4px;width:9px;height:4.4px;background:#0c0c0c;"></div>
<div class="abs" style="left:16.3px;top:609px;width:1.4px;height:2.6px;background:#c9b050;"></div>
<span class="t" style="left:25.30px;top:604.00px;line-height:14px;letter-spacing:-0.418px;color:#303942">q04sv38ZSzTBF4mEHo-3dVsyWITNHb2AHhoKmmcfMQvFLURsx3...LvPwyC...</span>
<span class="t" style="left:436.50px;top:604.00px;line-height:14px;letter-spacing:-0.177px;color:#303942">200</span>
<span class="t" style="left:565.00px;top:604.00px;line-height:14px;letter-spacing:0.328px;color:#303942">jpeg</span>
<span class="t" style="left:693.30px;top:604.00px;line-height:14px;letter-spacing:-0.280px;color:#303942;text-decoration:underline">10099663:17</span>
</div>
<span class="t" style="left:6.50px;top:201.00px;line-height:14px;letter-spacing:-0.254px;color:#303942">Name</span>
<span class="t" style="left:436.50px;top:201.00px;line-height:14px;letter-spacing:-0.255px;color:#303942">Status</span>
<span class="t" style="left:565.50px;top:201.00px;line-height:14px;letter-spacing:-0.379px;color:#303942">Type</span>
<span class="t" style="left:693.50px;top:201.00px;line-height:14px;letter-spacing:0.238px;color:#303942">Initiator</span>
<span class="t" style="left:907.50px;top:201.00px;line-height:14px;letter-spacing:-0.586px;color:#303942">Size</span>
<span class="t" style="left:1036.50px;top:201.00px;line-height:14px;letter-spacing:-0.184px;color:#303942">Time</span>
<span class="t" style="left:1166.00px;top:201.00px;line-height:14px;letter-spacing:0.010px;color:#303942">Waterfall</span>
<svg style="left:1320.5px;top:204px" width="9" height="6" viewBox="0 0 9 6"><path d="M0 5.5L4.3 0.5L8.6 5.5z" fill="#5f6368"/></svg>
<div class="abs" style="left:1166px;top:229px;width:2px;height:5px;background:#c8cbd0;"></div>
<div class="abs" style="left:1168px;top:225px;width:10.5px;height:13px;background:#12a5a5;"></div>
<div class="abs" style="left:1178.3px;top:225px;width:1px;height:13px;background:#1e7f3c;"></div>
<div class="abs" style="left:1179.2px;top:225px;width:5px;height:13px;background:#149be8;"></div>
<div class="abs" style="left:1166px;top:250px;width:2px;height:5px;background:#e6dcc3;"></div>
<div class="abs" style="left:1171px;top:246px;width:10px;height:13px;background:#0aa84f;"></div>
<div class="abs" style="left:1181px;top:246px;width:2px;height:13px;background:#1e9bf0;"></div>
<div class="abs" style="left:1243.8px;top:221px;width:2px;height:46px;background:#6c9fe6;"></div>
<div class="abs" style="left:1265px;top:221px;width:1px;height:46px;background:#b4b7bb;"></div>
<div class="abs" style="left:1271.8px;top:221px;width:2px;height:46px;background:#c4555c;"></div>
<div class="abs" style="left:1323px;top:221px;width:18px;height:395px;background:#f1f1f1;"></div>
<div class="abs" style="left:1325.5px;top:238.3px;width:12.5px;height:105.2px;background:#c1c1c1;"></div>
<svg style="left:1327.5px;top:227.5px" width="8" height="5" viewBox="0 0 8 5"><path d="M0 4.5L4 0.5L8 4.5z" fill="#a3a3a3"/></svg>
<svg style="left:1328px;top:604px" width="8" height="5" viewBox="0 0 8 5"><path d="M0 0.5L4 4.5L8 0.5z" fill="#505050"/></svg>
<div class="abs" style="left:0px;top:616px;width:1341px;height:27px;background:#f1f3f4;"></div>
<div class="abs" style="left:0px;top:616px;width:1341px;height:1px;background:#cacdd1;"></div>
<div class="abs" style="left:0px;top:643px;width:1341px;height:2px;background:#cacdd1;"></div>
<span class="t" style="left:12.50px;top:624.00px;line-height:14px;letter-spacing:-0.202px;color:#5f6368">64 requests</span>
<span class="t" style="left:92.50px;top:624.00px;line-height:14px;letter-spacing:-0.151px;color:#5f6368">185 kB transferred</span>
<span class="t" style="left:208.00px;top:624.00px;line-height:14px;letter-spacing:-0.253px;color:#5f6368">5.5 MB resources</span>
<span class="t" style="left:317.50px;top:624.00px;line-height:14px;letter-spacing:-0.370px;color:#5f6368">Finish: 15.48 s</span>
<span class="t" style="left:410.00px;top:624.00px;line-height:14px;letter-spacing:-0.164px;color:#1a1aa6">DOMContentLoaded: 7.79 s</span>
<span class="t" style="left:574.50px;top:624.00px;line-height:14px;letter-spacing:-0.326px;color:#c80000">Load: 10.57 s</span>
<div class="abs" style="left:82px;top:621px;width:1px;height:17px;background:#cacdd1;"></div>
<div class="abs" style="left:198px;top:621px;width:1px;height:17px;background:#cacdd1;"></div>
<div class="abs" style="left:307px;top:621px;width:1px;height:17px;background:#cacdd1;"></div>
<div class="abs" style="left:399px;top:621px;width:1px;height:17px;background:#cacdd1;"></div>
<div class="abs" style="left:564px;top:621px;width:1px;height:17px;background:#cacdd1;"></div>
<div class="abs" style="left:0px;top:645px;width:1341px;height:26px;background:#f1f3f4;"></div>
<div class="abs" style="left:0px;top:671px;width:1341px;height:1px;background:#cacdd1;"></div>
<svg style="left:15px;top:652px" width="4" height="13" viewBox="0 0 4 13"><circle cx="2" cy="1.7" r="1.2" fill="#5f6368"/><circle cx="2" cy="6.3" r="1.2" fill="#5f6368"/><circle cx="2" cy="10.9" r="1.2" fill="#5f6368"/></svg>
<span class="t" style="left:38.50px;top:652.00px;line-height:14px;letter-spacing:-0.219px;color:#303942">Console</span>
<div class="abs" style="left:29px;top:670px;width:62px;height:2px;background:#1a73e8;"></div>
<svg style="left:1321px;top:653px" width="10" height="10" viewBox="0 0 10 10"><path d="M0.5 0.5L9.5 9.5M9.5 0.5L0.5 9.5" stroke="#5f6368" stroke-width="1.3" fill="none"/></svg>
<div class="abs" style="left:0px;top:672px;width:1341px;height:26px;background:#f1f3f4;"></div>
<div class="abs" style="left:0px;top:698px;width:1341px;height:1px;background:#cacdd1;"></div>
<svg style="left:10px;top:678px" width="14" height="14" viewBox="0 0 14 14"><rect x="0.7" y="0.7" width="12.6" height="12.6" rx="1" fill="none" stroke="#5f6368" stroke-width="1.4"/><path d="M4.3 0.7v12.6" stroke="#5f6368" stroke-width="1.3"/><path d="M6.8 4.2L10.2 7L6.8 9.8z" fill="#5f6368"/></svg>
<svg style="left:37px;top:677px" width="16" height="16" viewBox="0 0 16 16"><circle cx="8" cy="8" r="6.5" fill="none" stroke="#5f6368" stroke-width="1.4"/><path d="M3.4 12.6L12.6 3.4" stroke="#5f6368" stroke-width="1.4"/></svg>
<div class="abs" style="left:63px;top:677px;width:1px;height:16px;background:#cacdd1;"></div>
<span class="t" style="left:73.00px;top:679.00px;line-height:14px;letter-spacing:0.271px;color:#303942">top</span>
<svg style="left:99px;top:682px" width="8" height="5" viewBox="0 0 8 5"><path d="M0 0h8L4 5z" fill="#5f6368"/></svg>
<div class="abs" style="left:117px;top:677px;width:1px;height:16px;background:#cacdd1;"></div>
<svg style="left:127px;top:679px" width="18" height="12" viewBox="0 0 18 12"><path d="M0.8 6C4.5 -0.6 13.5 -0.6 17.2 6C13.5 12.6 4.5 12.6 0.8 6z" fill="none" stroke="#5f6368" stroke-width="1.4"/><circle cx="9" cy="6" r="2.6" fill="none" stroke="#5f6368" stroke-width="1.4"/></svg>
<div class="abs" style="left:154px;top:677px;width:1px;height:16px;background:#cacdd1;"></div>
<div class="abs" style="left:161px;top:675px;width:1150px;height:21px;background:#fff;border:1px solid #e0e2e5;border-radius:2px"></div>
<span class="t" style="left:166.50px;top:680.00px;line-height:14px;letter-spacing:0.221px;color:#6a6e73">Filter</span>
<svg style="left:1319.2px;top:677px" width="16" height="16" viewBox="0 0 16 16"><path d="M6.63 3.04L6.85 1.30L9.15 1.30L9.37 3.04L10.54 3.52L11.93 2.45L13.55 4.07L12.48 5.46L12.96 6.63L14.70 6.85L14.70 9.15L12.96 9.37L12.48 10.54L13.55 11.93L11.93 13.55L10.54 12.48L9.37 12.96L9.15 14.70L6.85 14.70L6.63 12.96L5.46 12.48L4.07 13.55L2.45 11.93L3.52 10.54L3.04 9.37L1.30 9.15L1.30 6.85L3.04 6.63L3.52 5.46L2.45 4.07L4.07 2.45L5.46 3.52z" fill="none" stroke="#63676b" stroke-width="1.4" stroke-linejoin="round"/><circle cx="8" cy="8" r="2.2" fill="#63676b"/></svg>
<div class="abs" style="left:1px;top:699px;width:1340px;height:85px;background:#fff;"></div>
<div class="abs" style="left:1px;top:702px;width:1322px;height:1px;background:#f0f0f0;"></div>
<div class="abs" style="left:1px;top:722px;width:1322px;height:1px;background:#f0f0f0;"></div>
<div class="abs" style="left:1px;top:743px;width:1322px;height:1px;background:#f0f0f0;"></div>
<div class="abs" style="left:1px;top:763px;width:1322px;height:1px;background:#f0f0f0;"></div>
<div class="abs" style="left:1px;top:783px;width:1322px;height:1px;background:#f0f0f0;"></div>
<span class="t" style="left:32.00px;top:707.50px;line-height:13px;letter-spacing:-0.102px;font-size:11px;color:#008000;font-family:'Liberation Mono',monospace">beforeEach</span>
<span class="t" style="left:32.00px;top:727.50px;line-height:13px;letter-spacing:-0.047px;font-size:11px;color:#0000ff;font-family:'Liberation Mono',monospace">report pv</span>
<span class="t" style="left:32.00px;top:748.50px;line-height:13px;letter-spacing:-0.103px;font-size:11px;color:#008000;font-family:'Liberation Mono',monospace">created</span>
<span class="t" style="left:32.00px;top:768.50px;line-height:13px;letter-spacing:-0.103px;font-size:11px;color:#008000;font-family:'Liberation Mono',monospace">mounted</span>
<span class="t" style="left:85.00px;top:768.50px;line-height:13px;letter-spacing:-0.064px;font-size:11px;color:#1a1aa6;font-family:'Liberation Mono',monospace">1688380967976</span>
<div class="abs" style="left:1323px;top:699px;width:18px;height:85px;background:#f1f1f1;"></div>
<div class="abs" style="left:1326px;top:747px;width:12px;height:37px;background:#c1c1c1;"></div>
<svg style="left:1328px;top:705px" width="8" height="5" viewBox="0 0 8 5"><path d="M0 4.5L4 0.5L8 4.5z" fill="#505050"/></svg>
<div class="abs" style="left:929px;top:267px;width:394px;height:513.5px;background:#fff;border-radius:2px;box-shadow:0 1px 4px rgba(0,0,0,0.33),0 2px 8px rgba(0,0,0,0.10)"></div>
<svg style="left:1180.6px;top:258.5px" width="16" height="8.6" viewBox="0 0 16 8"><path d="M0 8L8 0L16 8z" fill="#fff"/><path d="M0.5 7.6L8 0.3L15.5 7.6" fill="none" stroke="rgba(0,0,0,0.12)" stroke-width="0.8"/></svg>
<span class="t" style="left:946.00px;top:282.00px;line-height:14px;letter-spacing:-0.134px;color:#303942">Queued at 8.87 ms</span>
<span class="t" style="left:946.00px;top:306.00px;line-height:14px;letter-spacing:-0.148px;color:#303942">Started at 9.44 ms</span>
<span class="t" style="left:946.00px;top:340.30px;line-height:14px;letter-spacing:-0.251px;color:#5f6368">Resource Scheduling</span>
<span class="t" style="left:1248.70px;top:340.30px;line-height:14px;letter-spacing:-0.660px;color:#5f6368">DURATION</span>
<span class="t" style="left:958.20px;top:364.00px;line-height:14px;letter-spacing:-0.056px;color:#303942">Queueing</span>
<div class="abs" style="left:1101.7px;top:363px;width:2.2px;height:15px;background:#4a4f57;"></div>
<span class="t" style="left:1265.50px;top:364.00px;line-height:14px;letter-spacing:-0.427px;color:#303942">0.57 ms</span>
<span class="t" style="left:946.00px;top:398.00px;line-height:14px;letter-spacing:-0.087px;color:#5f6368">Connection Start</span>
<span class="t" style="left:1248.70px;top:398.00px;line-height:14px;letter-spacing:-0.660px;color:#5f6368">DURATION</span>
<span class="t" style="left:958.20px;top:422.00px;line-height:14px;letter-spacing:-0.286px;color:#303942">Stalled</span>
<div class="abs" style="left:1102px;top:423.5px;width:1px;height:10px;background:#9aa0a6;"></div>
<span class="t" style="left:1264.90px;top:422.00px;line-height:14px;letter-spacing:-0.341px;color:#303942">4.36 ms</span>
<span class="t" style="left:958.20px;top:446.00px;line-height:14px;letter-spacing:-0.215px;color:#303942">DNS Lookup</span>
<div class="abs" style="left:1102px;top:447.5px;width:1px;height:10px;background:#12a5a5;"></div>
<span class="t" style="left:1298.51px;top:446.00px;line-height:14px;color:#303942">0</span>
<span class="t" style="left:958.20px;top:470.00px;line-height:14px;letter-spacing:0.067px;color:#303942">Initial connection</span>
<div class="abs" style="left:1102px;top:471.5px;width:1px;height:10px;background:#e59b2c;"></div>
<span class="t" style="left:1264.90px;top:470.00px;line-height:14px;letter-spacing:-0.341px;color:#303942">4.22 ms</span>
<span class="t" style="left:958.20px;top:494.00px;line-height:14px;letter-spacing:-1.696px;color:#303942">SSL</span>
<div class="abs" style="left:1102px;top:495.5px;width:1px;height:10px;background:#b93fd5;"></div>
<span class="t" style="left:1291.20px;top:494.00px;line-height:14px;letter-spacing:-1.000px;color:#303942">ms</span>
<div class="abs" style="left:1261px;top:487.5px;width:31px;height:9.5px;background:#f8f8f8;"></div>
<div class="abs" style="left:1273px;top:487.5px;width:12px;height:9.5px;background:#f4f4f4;"></div>
<div class="abs" style="left:1261px;top:497px;width:12px;height:12px;background:#e7e7e7;"></div>
<div class="abs" style="left:1273px;top:497px;width:12px;height:12px;background:#dedede;"></div>
<div class="abs" style="left:1285px;top:497px;width:6.5px;height:12px;background:#e3e3e3;"></div>
<svg style="left:1288px;top:505px" width="4" height="4" viewBox="0 0 4 4"><path d="M4 0V4H0z" fill="#fff"/></svg>
<span class="t" style="left:946.00px;top:528.00px;line-height:14px;letter-spacing:-0.474px;color:#5f6368">Request/Response</span>
<span class="t" style="left:1248.70px;top:528.00px;line-height:14px;letter-spacing:-0.660px;color:#5f6368">DURATION</span>
<span class="t" style="left:958.20px;top:552.00px;line-height:14px;letter-spacing:-0.268px;color:#303942">Request sent</span>
<div class="abs" style="left:1102.7px;top:552px;width:1px;height:14px;background:#7f9aa6;"></div>
<span class="t" style="left:1264.90px;top:552.00px;line-height:14px;letter-spacing:-0.341px;color:#303942">0.32 ms</span>
<span class="t" style="left:958.20px;top:576.00px;line-height:14px;letter-spacing:0.023px;color:#303942">Waiting for server</span>
<span class="t" style="left:958.20px;top:592.00px;line-height:14px;letter-spacing:-0.234px;color:#303942">response</span>
<div class="abs" style="left:1103px;top:583.2px;width:117px;height:14.6px;background:#0aa84f;"></div>
<span class="t" style="left:1251.70px;top:584.00px;line-height:14px;letter-spacing:-0.283px;color:#303942">980.62 ms</span>
<span class="t" style="left:958.20px;top:616.00px;line-height:14px;letter-spacing:0.048px;color:#303942">Content Download</span>
<div class="abs" style="left:1220px;top:615.2px;width:6px;height:14.5px;background:#1a96e0;"></div>
<span class="t" style="left:1258.40px;top:616.00px;line-height:14px;letter-spacing:-0.320px;color:#303942">49.29 ms</span>
<span class="t" style="left:946.00px;top:650.00px;line-height:14px;letter-spacing:-0.156px;color:#1a73e8;text-decoration:underline">Explanation</span>
<span class="t" style="left:1274.20px;top:650.00px;line-height:14px;letter-spacing:-0.396px;color:#303942;font-weight:bold">1.04 s</span>
<div class="abs" style="left:946px;top:688px;width:359px;height:1px;background:linear-gradient(90deg,rgba(60,64,67,0.12),rgba(60,64,67,0.9) 50%,rgba(60,64,67,0.12))"></div>
<span class="t" style="left:946.00px;top:715.00px;line-height:14px;letter-spacing:-0.118px;color:#5f6368">Server Timing</span>
<span class="t" style="left:1280.40px;top:715.00px;line-height:14px;letter-spacing:-0.968px;color:#5f6368">TIME</span>
<span class="t" style="left:958.20px;top:739.00px;line-height:14px;letter-spacing:-0.035px;color:#303942">During development, you can use </span>
<span class="t" style="left:1139.20px;top:739.00px;line-height:14px;letter-spacing:-0.108px;color:#1a73e8;text-decoration:underline">the Server Timing API</span>
<span class="t" style="left:1253.00px;top:739.00px;line-height:14px;letter-spacing:0.085px;color:#303942"> to add</span>
<span class="t" style="left:958.20px;top:755.00px;line-height:14px;letter-spacing:0.036px;color:#303942">insights into the server-side timing of this request.</span>
<div class="abs" style="left:1159.2px;top:192.5px;width:92.9px;height:79.5px;border:1.3px solid #fa231b;border-radius:4px"></div>
<div class="abs" style="left:939.8px;top:485px;width:381.3px;height:31.8px;border:1.25px solid #fa231b;border-radius:3.5px"></div>
<div class="abs" style="left:0px;top:0px;width:1px;height:784px;background:#c4c8cc;"></div>
<div class="abs" style="left:1px;top:192px;width:1px;height:453px;background:#cdd1d6;"></div>
</body></html>
